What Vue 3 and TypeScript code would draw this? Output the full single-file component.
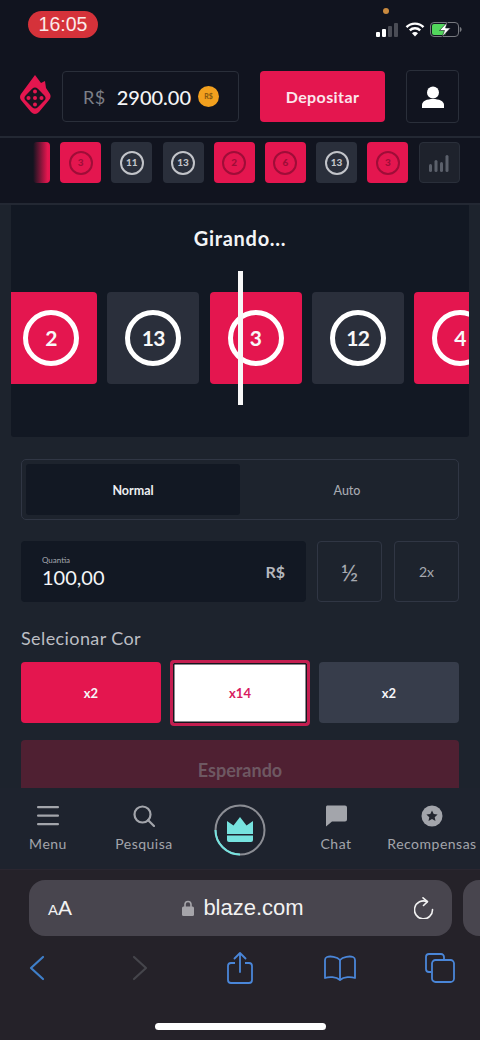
<template>
  <div class="screen">
    <div class="status-bar">
      <span class="clock">16:05</span>
      <span class="mic-dot"></span>
      <div class="status-icons">
        <svg width="22" height="14" viewBox="0 0 22 14">
          <rect x="0" y="9" width="4" height="5" rx="1" fill="#fff" />
          <rect x="6" y="6" width="4" height="8" rx="1" fill="#fff" />
          <rect x="12" y="3" width="4" height="11" rx="1" fill="#4a4c55" />
          <rect x="18" y="0" width="4" height="14" rx="1" fill="#4a4c55" />
        </svg>
        <svg class="wifi" width="20" height="15" viewBox="0 0 20 15">
          <path d="M1.5 5.2a12 12 0 0 1 17 0" fill="none" stroke="#fff" stroke-width="2.4" />
          <path d="M4.8 8.4a7.4 7.4 0 0 1 10.4 0" fill="none" stroke="#fff" stroke-width="2.4" />
          <path d="M10 14.5l-3-3.2a4.2 4.2 0 0 1 6 0z" fill="#fff" />
        </svg>
        <svg width="32" height="15" viewBox="0 0 32 15">
          <rect x="0.5" y="0.5" width="28" height="14" rx="3.5" fill="none" stroke="#77797f" />
          <rect x="2" y="2" width="14" height="11" rx="2" fill="#52d65c" />
          <path d="M29.8 5v5c1-.3 1.8-1.2 1.8-2.5S30.8 5.300 29.800 5z" fill="#77797f" />
          <path d="M17.500 0L9.500 8.500h5L12 15l8.500-9h-5z" fill="#fff" stroke="#14161f" stroke-width="0.6" />
        </svg>
      </div>
    </div>

    <header class="top-bar">
      <svg class="logo" width="32" height="40" viewBox="0 0 32 40">
        <path d="M15 0l6 8 4-2 1 7 4 6q1.500 3-1 6L19 37q-4 4-8 0L1 25q-2-3 0-6z" fill="#e4164f" />
        <rect x="6.500" y="14.500" width="17" height="17" rx="4" transform="rotate(45 15 23)" fill="#1a1420" />
        <circle cx="15" cy="16.500" r="2" fill="#e4164f" />
        <circle cx="8.500" cy="23" r="2" fill="#e4164f" />
        <circle cx="15" cy="23" r="2" fill="#e4164f" />
        <circle cx="21.500" cy="23" r="2" fill="#e4164f" />
        <circle cx="15" cy="29.500" r="2" fill="#e4164f" />
      </svg>
      <div class="balance">
        <span class="currency">R$</span>
        <span class="amount">2900.00</span>
        <span class="coin">R$</span>
      </div>
      <button class="deposit">Depositar</button>
      <button class="user">
        <svg width="24" height="22" viewBox="0 0 24 22" fill="#fff">
          <circle cx="12" cy="6.500" r="6" />
          <path d="M1 22v-3c0-4 5-6 11-6s11 2 11 6v3z" />
        </svg>
      </button>
    </header>

    <div class="history">
      <div class="small-chip red fade"><span class="small-ring">3</span></div>
      <div v-for="(h, i) in history" :key="i" class="small-chip" :class="h.color">
        <span class="small-ring">{{ h.n }}</span>
      </div>
      <div class="small-chip stats">
        <svg width="20" height="18" viewBox="0 0 20 18" fill="#5b606b">
          <rect x="0" y="10" width="3" height="8" rx="1.500" />
          <rect x="5.500" y="6" width="3" height="12" rx="1.500" />
          <rect x="11" y="8" width="3" height="10" rx="1.500" />
          <rect x="16.500" y="1" width="3" height="17" rx="1.500" />
        </svg>
      </div>
    </div>

    <main class="game">
      <section class="spinner">
        <h2>Girando...</h2>
        <div class="track">
          <div v-for="(r, i) in reel" :key="i" class="big-chip" :class="r.color">
            <span class="big-ring">{{ r.n }}</span>
          </div>
        </div>
        <span class="marker"></span>
      </section>

      <section class="controls">
        <div class="tabs">
          <span class="tab active">Normal</span>
          <span class="tab">Auto</span>
        </div>

        <div class="amount-row">
          <div class="amount-input">
            <div>
              <div class="amount-label">Quantia</div>
              <div class="amount-value">100,00</div>
            </div>
            <span class="amount-cur">R$</span>
          </div>
          <button class="mini half">½</button>
          <button class="mini">2x</button>
        </div>

        <div class="pick-title">Selecionar Cor</div>
        <div class="colors">
          <button class="color red">x2</button>
          <button class="color white">x14</button>
          <button class="color dark">x2</button>
        </div>

        <button class="wait">Esperando</button>
      </section>
    </main>

    <nav class="bottom-nav">
      <div class="nav-item">
        <svg width="22" height="20" viewBox="0 0 22 20" fill="#a3a5ab">
          <rect x="0" y="0" width="22" height="2.200" rx="1" />
          <rect x="0" y="8.500" width="22" height="2.200" rx="1" />
          <rect x="0" y="17" width="22" height="2.200" rx="1" />
        </svg>
        <span>Menu</span>
      </div>
      <div class="nav-item">
        <svg width="22" height="22" viewBox="0 0 22 22" fill="none" stroke="#a3a5ab" stroke-width="2.200">
          <circle cx="9.500" cy="9.500" r="8" />
          <path d="M15 15l6 6" stroke-linecap="round" />
        </svg>
        <span>Pesquisa</span>
      </div>
      <div class="nav-item crown">
        <svg width="52" height="52" viewBox="0 0 52 52">
          <circle cx="26" cy="26" r="24.500" fill="none" stroke="#8b8d94" stroke-width="2" />
          <path d="M1.500 26A24.500 24.500 0 0 0 26 50.500" fill="none" stroke="#76e3df" stroke-width="2" />
          <path d="M13 17l6.500 4.500L26 13l6.500 8.500L39 17v13H13z" fill="#76e3df" />
          <path d="M13 31.500h26V36a2 2 0 0 1-2 2H15a2 2 0 0 1-2-2z" fill="#76e3df" />
        </svg>
      </div>
      <div class="nav-item">
        <svg width="22" height="21" viewBox="0 0 22 21" fill="#a3a5ab">
          <path d="M2 0h18a2 2 0 0 1 2 2v12a2 2 0 0 1-2 2H7l-6 5V2a2 2 0 0 1 1-2z" />
        </svg>
        <span>Chat</span>
      </div>
      <div class="nav-item">
        <svg width="22" height="22" viewBox="0 0 22 22">
          <circle cx="11" cy="11" r="10.500" fill="#a3a5ab" />
          <path d="M11 5.500l1.700 3.600 3.900.5-2.900 2.600.8 3.900-3.500-2-3.500 2 .8-3.900-2.900-2.600 3.900-.5z" fill="#23262f" />
        </svg>
        <span>Recompensas</span>
      </div>
    </nav>

    <div class="safari">
      <div class="url-row">
        <div class="url-bar">
          <span class="aa"><small>A</small>A</span>
          <span class="address">
            <svg width="12" height="16" viewBox="0 0 12 16">
              <path d="M3 7V4.500a3 3 0 0 1 6 0V7" fill="none" stroke="#a5a4a9" stroke-width="1.600" />
              <rect x="0" y="6.500" width="12" height="9.500" rx="1.500" fill="#a5a4a9" />
            </svg>
            blaze.com
          </span>
          <svg width="20" height="22" viewBox="0 0 20 22" fill="none" stroke="#f2f2f2" stroke-width="1.600">
            <path d="M13 4.600A9 9 0 1 0 18.500 12.500" stroke-linecap="round" />
            <path d="M9 0.800l4.500 3.800L9.500 8.500" stroke-linecap="round" stroke-linejoin="round" />
          </svg>
        </div>
        <div class="next-tab"></div>
      </div>
      <div class="toolbar">
        <svg class="back" width="16" height="26" viewBox="0 0 16 26" fill="none" stroke="#3f7fc9" stroke-width="2.200">
          <path d="M14 2L2 13l12 11" stroke-linecap="round" stroke-linejoin="round" />
        </svg>
        <svg width="16" height="26" viewBox="0 0 16 26" fill="none" stroke="#45454b" stroke-width="2.200">
          <path d="M2 2l12 11L2 24" stroke-linecap="round" stroke-linejoin="round" />
        </svg>
        <svg width="26" height="32" viewBox="0 0 26 32" fill="none" stroke="#4a86d8" stroke-width="1.800">
          <path d="M8 11H4a3 3 0 0 0-3 3v14a3 3 0 0 0 3 3h18a3 3 0 0 0 3-3V14a3 3 0 0 0-3-3h-4" />
          <path d="M13 20V1.500M7.500 6.500L13 1l5.500 5.500" stroke-linecap="round" stroke-linejoin="round" />
        </svg>
        <svg width="32" height="26" viewBox="0 0 32 26" fill="none" stroke="#4a86d8" stroke-width="1.800">
          <path d="M16 5C13 1.500 6 1 3 2 1.500 2.500 1 3 1 5v18c4-1.500 11-1.500 15 2 4-3.500 11-3.500 15-2V5c0-2-.5-2.500-2-3-3-1-10-.5-13 3z" stroke-linejoin="round" />
          <path d="M16 5v20" />
        </svg>
        <svg width="30" height="30" viewBox="0 0 30 30" fill="none" stroke="#4a86d8" stroke-width="1.800">
          <path d="M19 6V4a3 3 0 0 0-3-3H4a3 3 0 0 0-3 3v12a3 3 0 0 0 3 3h2" />
          <rect x="7" y="7" width="22" height="22" rx="3.500" />
        </svg>
      </div>
      <div class="home-bar"></div>
    </div>
  </div>
</template>

<script setup lang="ts">
interface Roll {
  n: number
  color: 'red' | 'dark'
}

const history: Roll[] = [
  { n: 3, color: 'red' },
  { n: 11, color: 'dark' },
  { n: 13, color: 'dark' },
  { n: 2, color: 'red' },
  { n: 6, color: 'red' },
  { n: 13, color: 'dark' },
  { n: 3, color: 'red' },
]

const reel: Roll[] = [
  { n: 2, color: 'red' },
  { n: 13, color: 'dark' },
  { n: 3, color: 'red' },
  { n: 12, color: 'dark' },
  { n: 4, color: 'red' },
]
</script>

<style>
html,
body {
  margin: 0;
  background: #11141f;
}
</style>

<style scoped>
.screen {
  width: 480px;
  height: 1040px;
  display: flex;
  flex-direction: column;
  overflow: hidden;
  background: #11141f;
  font-family: Lato, 'Open Sans', sans-serif;
  color: #fff;
}

button {
  font-family: inherit;
  border: none;
  padding: 0;
}

.status-bar {
  position: relative;
  height: 52px;
  flex: none;
  padding: 11px 18px 0 28px;
  box-sizing: border-box;
  display: flex;
  justify-content: space-between;
  align-items: flex-start;
}

.clock {
  width: 70px;
  height: 27px;
  border-radius: 14px;
  background: #d5323a;
  text-align: center;
  font: 400 19.500px/27px 'Liberation Sans', sans-serif;
  color: #fbeaea;
}

.mic-dot {
  position: absolute;
  left: 383px;
  top: 8px;
  width: 6px;
  height: 6px;
  border-radius: 50%;
  background: #c98a3f;
}

.status-icons {
  display: flex;
  align-items: center;
  gap: 7px;
  margin-top: 11px;
}

.wifi {
  margin-right: -2px;
}

.top-bar {
  height: 86px;
  flex: none;
  box-sizing: border-box;
  border-bottom: 2px solid #232833;
  display: flex;
  align-items: center;
  padding: 5px 20px 0 20px;
}

.logo {
  flex: none;
  margin-top: -3px;
}

.balance {
  width: 177px;
  height: 51px;
  margin-left: 10px;
  box-sizing: border-box;
  border: 1px solid #2a2f3a;
  border-radius: 4px;
  display: flex;
  align-items: center;
  padding-left: 20px;
}

.currency {
  font-size: 18px;
  color: #7c7f87;
  letter-spacing: 0.5px;
}

.amount {
  margin-left: 11px;
  font-size: 20px;
  font-weight: 500;
  color: #f4f4f6;
}

.coin {
  width: 21px;
  height: 21px;
  margin-left: 7px;
  border-radius: 50%;
  background: #f2a01e;
  color: #8a5a10;
  font-size: 7px;
  font-weight: 900;
  line-height: 21px;
  text-align: center;
}

.deposit {
  width: 125px;
  height: 51px;
  margin-left: 21px;
  border-radius: 4px;
  background: #e4164f;
  color: #fbe6ec;
  font-size: 16px;
  font-weight: 700;
  letter-spacing: 0.4px;
}

.user {
  width: 53px;
  height: 53px;
  margin-left: 21px;
  border: 1px solid #2a2f3a;
  border-radius: 4px;
  background: transparent;
  display: flex;
  align-items: center;
  justify-content: center;
}

.history {
  height: 67px;
  flex: none;
  box-sizing: border-box;
  padding: 4px 20px 0 33px;
  border-bottom: 2px solid #232833;
  display: flex;
  gap: 10.2px;
  overflow: hidden;
}

.small-chip {
  width: 41px;
  height: 41px;
  flex: none;
  border-radius: 4px;
  display: flex;
  align-items: center;
  justify-content: center;
}

.small-chip.red {
  background: #e4164f;
  color: #9f0d38;
}

.small-chip.dark {
  background: #2a2f3b;
  color: #c2c4c9;
}

.small-chip.fade {
  width: 17px;
  overflow: hidden;
  justify-content: flex-end;
  background: linear-gradient(to right, #11141f, #e4164f 85%);
}

.small-chip.fade .small-ring {
  display: none;
}

.small-chip.stats {
  box-sizing: border-box;
  border: 1px solid #2a2f3a;
  background: #1e222c;
}

.small-ring {
  width: 24px;
  height: 24px;
  box-sizing: border-box;
  border: 2.500px solid currentColor;
  border-radius: 50%;
  text-align: center;
  font-size: 10px;
  font-weight: 900;
  line-height: 19px;
}

.game {
  height: 583px;
  flex: none;
  overflow: hidden;
  background: #1d232d;
}

.spinner {
  position: relative;
  height: 232px;
  margin: 0 11px;
  border-radius: 0 0 3px 3px;
  background: #121823;
  box-sizing: border-box;
  padding-top: 21px;
}

.spinner h2 {
  margin: 0;
  text-align: center;
  font-size: 20px;
  line-height: 24px;
  font-weight: 700;
  letter-spacing: 0.7px;
  color: #f3f4f6;
}

.track {
  display: flex;
  gap: 10.250px;
  margin-top: 42px;
  overflow: hidden;
}

.big-chip {
  width: 92px;
  height: 92px;
  flex: none;
  border-radius: 4px;
  display: flex;
  align-items: center;
  justify-content: center;
}

.big-chip:first-child {
  margin-left: -6px;
}

.big-chip.red {
  background: #e4164f;
}

.big-chip.dark {
  background: #2a2f3b;
}

.big-ring {
  width: 56px;
  height: 56px;
  box-sizing: border-box;
  border: 5px solid #fff;
  border-radius: 50%;
  text-align: center;
  font-size: 21px;
  font-weight: 700;
  letter-spacing: -0.8px;
  line-height: 46px;
  color: #f8f8f8;
}

.marker {
  position: absolute;
  left: 227px;
  top: 66px;
  width: 5px;
  height: 134px;
  background: #f7f7f7;
}

.controls {
  padding: 22px 21px 0;
}

.tabs {
  height: 61px;
  box-sizing: border-box;
  border: 1px solid #303644;
  border-radius: 5px;
  padding: 4px;
  display: flex;
}

.tab {
  flex: 1;
  display: flex;
  align-items: center;
  justify-content: center;
  padding-top: 1px;
  font-size: 12.500px;
  font-weight: 500;
  color: #a6a9b0;
}

.tab.active {
  background: #121823;
  border-radius: 3px;
  color: #eceef1;
  font-weight: 700;
}

.amount-row {
  display: flex;
  gap: 11px;
  margin-top: 21px;
}

.amount-input {
  width: 285px;
  height: 61px;
  box-sizing: border-box;
  padding: 14px 21px 0 21px;
  background: #121823;
  border-radius: 4px;
  display: flex;
  justify-content: space-between;
  align-items: flex-start;
}

.amount-label {
  font-size: 8px;
  line-height: 10px;
  color: #a6a9b0;
}

.amount-value {
  font-size: 20px;
  line-height: 24px;
  color: #f4f5f7;
}

.amount-cur {
  margin-top: 7px;
  font-size: 16px;
  font-weight: 700;
  color: #b5b7bd;
}

.mini {
  width: 65px;
  height: 61px;
  box-sizing: border-box;
  border: 1px solid #303644;
  border-radius: 4px;
  background: transparent;
  color: #a6a9b0;
  font-size: 14px;
}

.mini.half {
  margin-right: 1px;
  font-size: 24px;
}

.pick-title {
  margin-top: 26px;
  font-size: 18px;
  line-height: 20px;
  letter-spacing: 0.4px;
  color: #bcbec4;
}

.colors {
  display: flex;
  gap: 9px;
  margin-top: 14px;
}

.color {
  width: 140px;
  height: 61px;
  flex: none;
  box-sizing: border-box;
  border-radius: 4px;
  font-size: 13px;
  font-weight: 700;
  color: #f6f6f8;
}

.color.red {
  background: #e4164f;
}

.color.white {
  height: 66px;
  margin: -2.500px 0;
  border: 3px solid #c41e50;
  background: #fff;
  color: #d81b60;
  box-shadow: inset 0 0 0 1.500px #16161e;
}

.color.dark {
  background: #373d4b;
}

.wait {
  display: block;
  width: 100%;
  height: 60px;
  margin-top: 17px;
  border-radius: 4px;
  background: #4f2032;
  color: #6e5862;
  font-size: 18px;
  font-weight: 700;
}

.bottom-nav {
  height: 82px;
  flex: none;
  box-sizing: border-box;
  display: grid;
  grid-template-columns: repeat(5, 96px);
  background: #1e232e;
  border-bottom: 1px solid #2b2630;
}

.nav-item {
  display: flex;
  flex-direction: column;
  align-items: center;
  padding-top: 17px;
  gap: 8px;
  font-size: 14px;
  letter-spacing: 0.5px;
  color: #a3a5ab;
  white-space: nowrap;
}

.nav-item svg {
  height: 22px;
}

.nav-item.crown {
  padding-top: 16px;
}

.nav-item.crown svg {
  height: 52px;
}

.safari {
  flex: 1;
  background: #252229;
  padding-top: 10px;
}

.url-row {
  display: flex;
  gap: 11px;
  padding-left: 29px;
}

.url-bar {
  width: 423px;
  height: 56px;
  flex: none;
  box-sizing: border-box;
  padding: 0 18px 0 19px;
  border-radius: 16px;
  background: #48454e;
  display: flex;
  align-items: center;
  justify-content: space-between;
}

.aa {
  font: 400 21px 'Liberation Sans', sans-serif;
  color: #f2f2f2;
}

.aa small {
  font-size: 15px;
}

.address {
  display: flex;
  align-items: center;
  gap: 9px;
  font: 400 22px 'Liberation Sans', sans-serif;
  color: #f2f2f2;
}

.next-tab {
  width: 40px;
  height: 56px;
  flex: none;
  border-radius: 16px;
  background: #48454e;
}

.toolbar {
  display: grid;
  grid-template-columns: repeat(5, 100px);
  justify-items: center;
  align-items: center;
  height: 32px;
  margin-top: 16px;
  margin-left: -10px;
}

.back {
  margin-right: 6px;
}

.home-bar {
  width: 171px;
  height: 7px;
  margin: 39px auto 0;
  border-radius: 4px;
  background: #fff;
}
</style>
